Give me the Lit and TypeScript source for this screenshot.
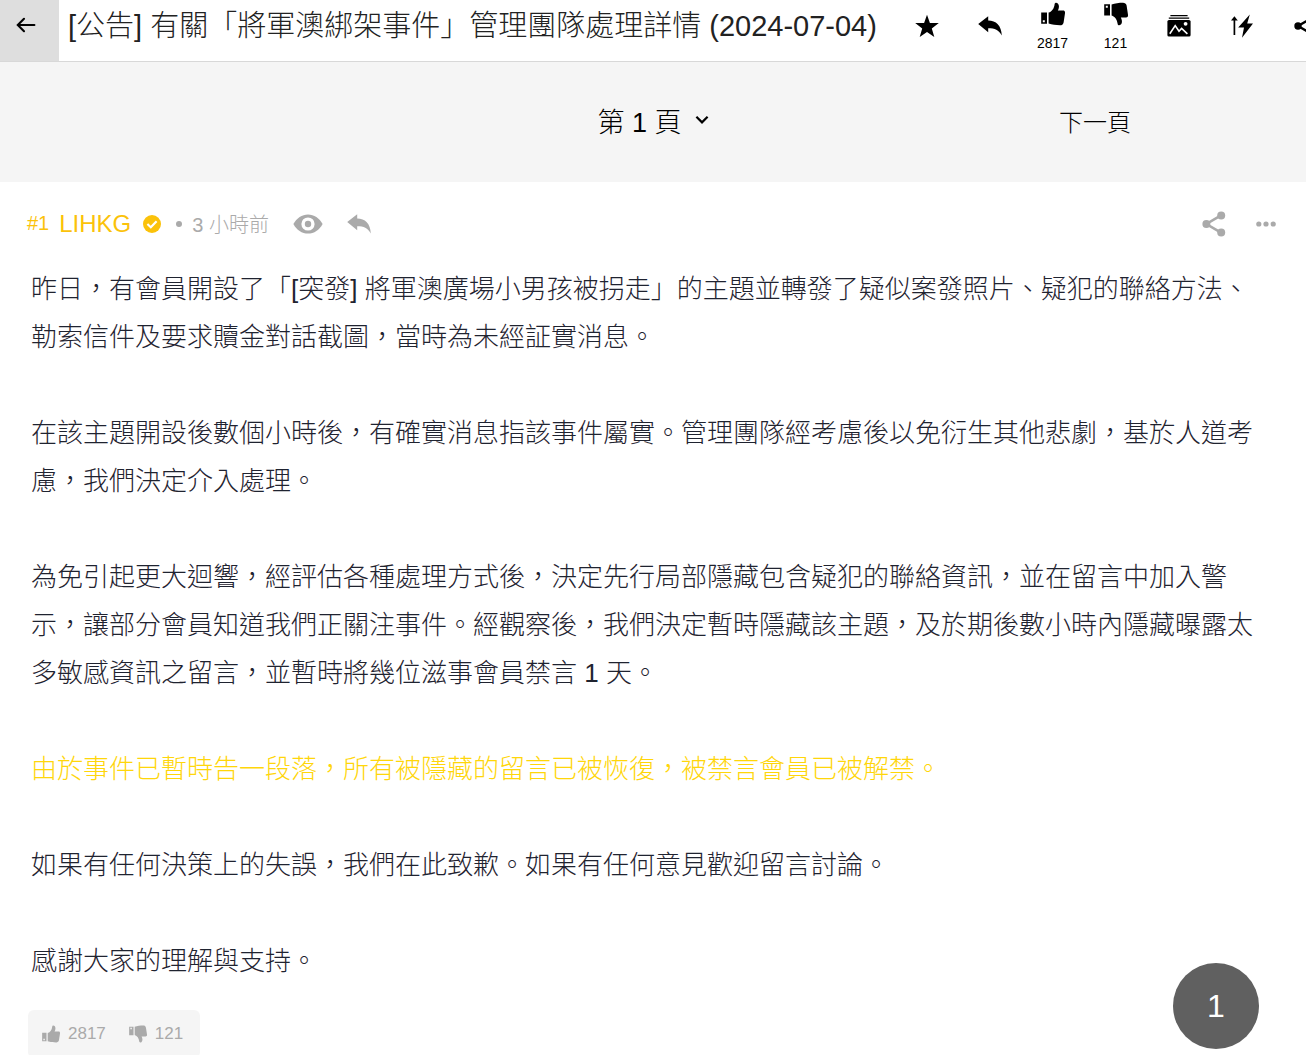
import { LitElement, html, css, svg } from "lit";
import { customElement, property } from "lit/decorators.js";

const icons: Record<string, [string, unknown]> = {
  back: ["0 0 20 16", svg`<path d="M8 1.8 1.8 8 8 14.2M2 8H18.4" fill="none" stroke="currentColor" stroke-width="2.1" stroke-linecap="round"/>`],
  star: ["0 0 24 23", svg`<path d="M12 .2 14.9 8.4 23.8 8.6 16.8 14 19.3 22.6 12 17.6 4.7 22.6 7.2 14 .2 8.6 9.1 8.4Z" fill="currentColor"/>`],
  reply: ["0 0 24 20", svg`<path d="M.2 8 10.2.2V4.4C18 4.4 23.4 9.4 23.8 19.4 20.6 14 17 12.2 10.2 12.2V16.2Z" fill="currentColor"/>`],
  thumb: ["0 0 24 24", svg`<path d="M7.6 10.6C11 9.6 13.2 6.2 13.6 2.2 13.8.4 15.6.2 16.8 1.4 18.6 3.2 18 6.6 16.8 8.6H22.2C23.6 8.6 24.2 9.8 24 11.2L22.6 20.4C22.2 22.4 20.8 23.2 19 23.2 15 23.2 11 22.6 7.6 21.6Z" fill="currentColor"/><path fill-rule="evenodd" d="M.2 10.4H6V21.8H.2ZM1.8 18.2V20.2H3.8V18.2Z" fill="currentColor"/>`],
  gallery: ["0 0 24 22", svg`<path d="M3.4.6H20.6M1.8 3.2H22.2" stroke="currentColor" stroke-width="1.2"/><rect x=".4" y="5" width="23.2" height="16.6" rx="1.6" fill="currentColor"/><path d="M2.8 18.8 8.2 10.6 12 16.2 14.6 13.4 20.4 18.8" fill="none" stroke="#fff" stroke-width="1.6"/><circle cx="18.6" cy="8.8" r="1.9" fill="#fff"/>`],
  boost: ["0 0 22 24", svg`<path d="M3.4 21V4" fill="none" stroke="currentColor" stroke-width="1.7"/><path d="M3.4 2.2 6.8 6.4H0Z" fill="currentColor"/><path d="M18.8.4 7.2 13.6H13L11 23.8 22 9.6H16.2Z" fill="currentColor"/>`],
  share: ["0 0 24 26", svg`<path d="M19 4.4 4.4 13 19 21.6" fill="none" stroke="currentColor" stroke-width="2.6"/><circle cx="19.2" cy="4.6" r="4" fill="currentColor"/><circle cx="4.4" cy="13" r="4" fill="currentColor"/><circle cx="19.2" cy="21.4" r="4" fill="currentColor"/>`],
  chevron: ["0 0 14 10", svg`<path d="M1.4 1.8 7 7.4 12.6 1.8" fill="none" stroke="currentColor" stroke-width="2.2"/>`],
  check: ["0 0 18 18", svg`<circle cx="9" cy="9" r="9" fill="currentColor"/><path d="M4.4 9 7.8 12.2 13.6 6.2" fill="none" stroke="#fff" stroke-width="2.2"/>`],
  eye: ["0 0 30 20", svg`<path d="M.4 10C3.6 4 9 .4 15 .4S26.4 4 29.6 10C26.4 16 21 19.6 15 19.6S3.6 16 .4 10Z" fill="currentColor"/><circle cx="15" cy="10" r="6.6" fill="#fff"/><circle cx="15" cy="10" r="3.2" fill="currentColor"/>`],
  more: ["0 0 20 6", svg`<circle cx="2.8" cy="3" r="2.6" fill="currentColor"/><circle cx="10" cy="3" r="2.6" fill="currentColor"/><circle cx="17.2" cy="3" r="2.6" fill="currentColor"/>`],
};

@customElement("ui-icon")
export class UiIcon extends LitElement {
  @property() name = "star";
  static styles = css`
    :host { display: inline-flex; }
    svg { display: block; width: 100%; height: 100%; }
  `;
  render() {
    const [box, shape] = icons[this.name];
    return html`<svg viewBox=${box} aria-hidden="true">${shape}</svg>`;
  }
}

@customElement("app-root")
export class AppRoot extends LitElement {
  static styles = css`
    :host {
      display: flex;
      flex-direction: column;
      position: relative;
      height: 100vh;
      overflow: hidden;
      background: #fff;
      color: #222;
      font-family: "Liberation Sans", "Noto Sans CJK TC", sans-serif;
      font-weight: 300;
    }
    * { box-sizing: border-box; }
    button, select {
      margin: 0; padding: 0; border: 0; background: none;
      font: inherit; color: inherit; cursor: pointer;
    }
    a { color: inherit; text-decoration: none; }
    header {
      display: flex;
      flex: none;
      height: 62px;
      border-bottom: 1px solid #d8d8d8;
      overflow: hidden;
    }
    .back {
      display: flex; justify-content: center;
      flex: none; width: 59px; padding: 17px 8px 0 0;
      background: #dedede; color: #000;
    }
    .i-back { width: 20px; height: 16px; }
    h1 {
      flex: 1; min-width: 0; margin: 0; padding-left: 9px;
      font-size: 29px; font-weight: 300; line-height: 52px;
      white-space: nowrap; overflow: hidden;
    }
    .tools { display: flex; flex: none; margin-right: -30px; color: #000; }
    .tool {
      display: flex; flex-direction: column; align-items: center; justify-content: center;
      width: 63px; height: 52px; font-size: 14px; line-height: 16px; gap: 9px;
    }
    .i-24 { width: 24px; height: 24px; }
    .flip { transform: scaleY(-1); }
    .pager {
      display: grid; grid-template-columns: 1fr 1fr 1fr; gap: 20px;
      flex: none; height: 120px; align-items: center; justify-items: center;
      background: #f5f5f5; color: #000;
    }
    .picker { display: flex; align-items: center; grid-column: 2; gap: 12px; }
    .picker select { appearance: none; font-size: 27px; height: 48px; padding-top: 2px; }
    .i-chevron { width: 14px; height: 10px; margin-bottom: 4px; }
    .next { padding-bottom: 4px; font-size: 24px; }
    main { flex: 1; min-height: 0; overflow: hidden; padding: 0 28px; }
    .meta {
      display: flex; align-items: center; height: 83px;
      margin-left: -1px; padding-right: 2px; color: #aaa; font-size: 20px;
    }
    .no { color: #fbc20a; }
    .name { margin: 0 12px 0 10px; color: #fbc20a; font-size: 24px; }
    .i-check { width: 18px; height: 18px; color: #fbc20a; }
    .dot { width: 6px; height: 6px; margin: 0 10px 0 15px; border-radius: 50%; background: #aaa; }
    .i-eye { width: 30px; height: 20px; }
    .act { display: flex; margin-left: 24px; }
    .i-share { width: 24px; height: 26px; }
    .i-more { width: 20px; height: 6px; }
    .push { margin-left: auto; }
    .last { margin-left: 30px; }
    .body { padding: 0 7px 0 3px; color: #1f2330; font-size: 26px; line-height: 48px; }
    .body p { margin: 0 0 48px; }
    .body p:last-child { margin: 0; }
    .body .notice { color: #ffd60a; }
    .votes {
      display: inline-flex; align-items: center; gap: 23px;
      height: 48px; margin-top: 25px; padding: 0 17px 0 14px;
      border-radius: 6px; background: #f5f5f5; color: #aaa; font-size: 17px;
    }
    .votes button { display: flex; align-items: center; gap: 8px; }
    .i-18 { width: 18px; height: 18px; }
    .badge {
      position: absolute; right: 47px; bottom: 6px;
      width: 86px; height: 86px; border-radius: 50%;
      background: #606060; color: #fff; font-size: 32px;
    }
  `;

  render() {
    return html`
      <header lang="zh-HK">
        <button class="back" aria-label="返回"><ui-icon class="i-back" name="back"></ui-icon></button>
        <h1>[公告] 有關「將軍澳綁架事件」管理團隊處理詳情 (2024-07-04)</h1>
        <div class="tools">
          <button class="tool" aria-label="收藏"><ui-icon class="i-24" name="star"></ui-icon></button>
          <button class="tool" aria-label="回覆"><ui-icon class="i-24" name="reply"></ui-icon></button>
          <button class="tool"><ui-icon class="i-24" name="thumb"></ui-icon>2817</button>
          <button class="tool"><ui-icon class="i-24 flip" name="thumb"></ui-icon>121</button>
          <button class="tool" aria-label="圖片"><ui-icon class="i-24" name="gallery"></ui-icon></button>
          <button class="tool" aria-label="推文"><ui-icon class="i-24" name="boost"></ui-icon></button>
          <button class="tool" aria-label="分享"><ui-icon class="i-24" name="share"></ui-icon></button>
        </div>
      </header>
      <nav class="pager" lang="zh-HK">
        <label class="picker">
          <select aria-label="頁數"><option>第 1 頁</option></select>
          <ui-icon class="i-chevron" name="chevron"></ui-icon>
        </label>
        <a class="next" href="#2">下一頁</a>
      </nav>
      <main lang="zh-HK">
        <div class="meta">
          <span class="no">#1</span>
          <a class="name" href="#lihkg">LIHKG</a>
          <ui-icon class="i-check" name="check"></ui-icon>
          <span class="dot"></span>
          <span>3 小時前</span>
          <button class="act" aria-label="只看此人"><ui-icon class="i-eye" name="eye"></ui-icon></button>
          <button class="act" aria-label="回覆"><ui-icon class="i-24" name="reply"></ui-icon></button>
          <button class="act push" aria-label="分享"><ui-icon class="i-share" name="share"></ui-icon></button>
          <button class="act last" aria-label="更多"><ui-icon class="i-more" name="more"></ui-icon></button>
        </div>
        <article class="body">
          <p>昨日，有會員開設了「[突發] 將軍澳廣場小男孩被拐走」的主題並轉發了疑似案發照片、疑犯的聯絡方法、勒索信件及要求贖金對話截圖，當時為未經証實消息。</p>
          <p>在該主題開設後數個小時後，有確實消息指該事件屬實。管理團隊經考慮後以免衍生其他悲劇，基於人道考慮，我們決定介入處理。</p>
          <p>為免引起更大迴響，經評估各種處理方式後，決定先行局部隱藏包含疑犯的聯絡資訊，並在留言中加入警示，讓部分會員知道我們正關注事件。經觀察後，我們決定暫時隱藏該主題，及於期後數小時內隱藏曝露太多敏感資訊之留言，並暫時將幾位滋事會員禁言 1 天。</p>
          <p class="notice">由於事件已暫時告一段落，所有被隱藏的留言已被恢復，被禁言會員已被解禁。</p>
          <p>如果有任何決策上的失誤，我們在此致歉。如果有任何意見歡迎留言討論。</p>
          <p>感謝大家的理解與支持。</p>
        </article>
        <div class="votes">
          <button><ui-icon class="i-18" name="thumb"></ui-icon>2817</button>
          <button><ui-icon class="i-18 flip" name="thumb"></ui-icon>121</button>
        </div>
      </main>
      <button class="badge">1</button>
    `;
  }
}
